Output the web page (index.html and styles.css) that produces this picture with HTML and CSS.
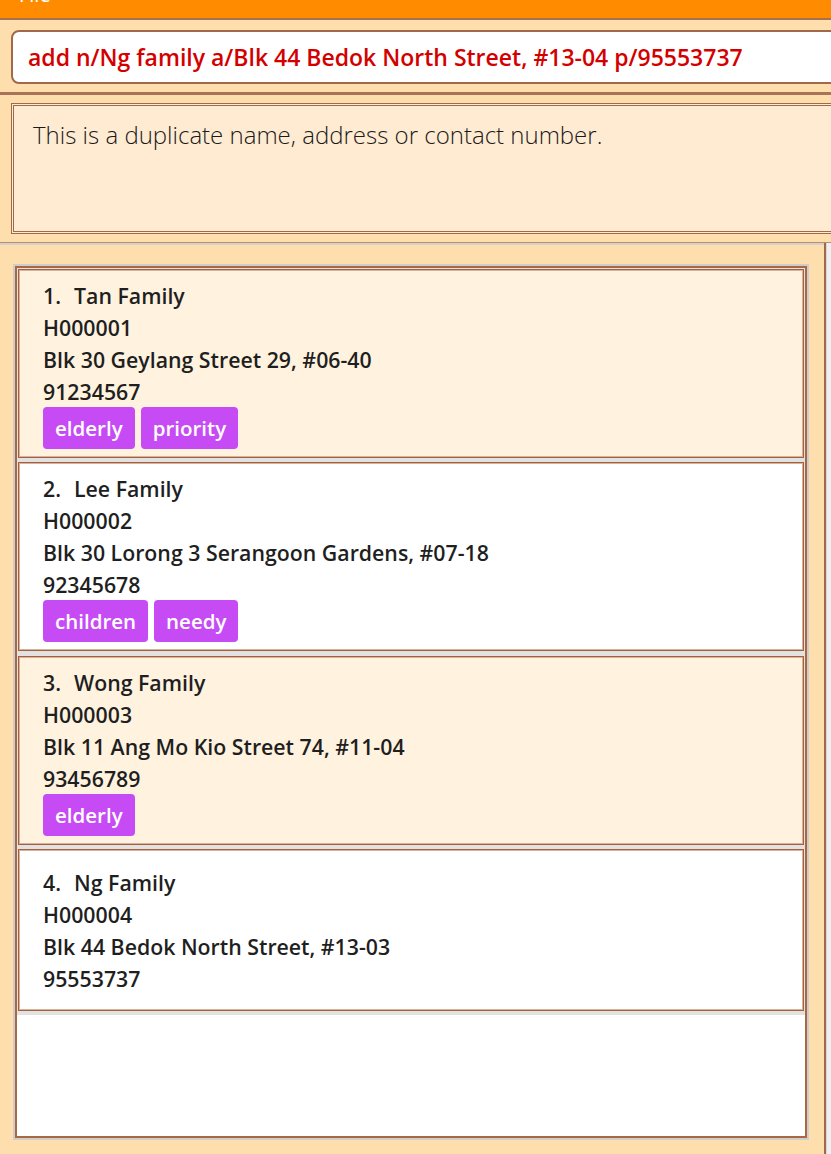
FILE: index.html
```html
<!DOCTYPE html>
<html>
<head>
<meta charset="utf-8">
<link rel="stylesheet" href="styles.css">
</head>
<body>
<div class="app">
  <div class="menubar"><span class="menu-item">File</span></div>
  <div class="command-pane">
    <div class="command-box">add n/Ng family a/Blk 44 Bedok North Street, #13-04 p/95553737</div>
  </div>
  <div class="result-pane">
    <div class="result-box">This is a duplicate name, address or contact number.</div>
  </div>
  <div class="list-row">
    <div class="list-pane">
      <div class="list">
        <div class="list-inner">
          <div class="cell">
            <div class="card odd">
              <div class="line"><span class="idx">1.</span>Tan Family</div>
              <div class="line">H000001</div>
              <div class="line">Blk 30 Geylang Street 29, #06-40</div>
              <div class="line">91234567</div>
              <div class="tags"><span class="tag">elderly</span><span class="tag">priority</span></div>
            </div>
          </div>
          <div class="cell">
            <div class="card even">
              <div class="line"><span class="idx">2.</span>Lee Family</div>
              <div class="line">H000002</div>
              <div class="line">Blk 30 Lorong 3 Serangoon Gardens, #07-18</div>
              <div class="line">92345678</div>
              <div class="tags"><span class="tag">children</span><span class="tag">needy</span></div>
            </div>
          </div>
          <div class="cell">
            <div class="card odd">
              <div class="line"><span class="idx">3.</span>Wong Family</div>
              <div class="line">H000003</div>
              <div class="line">Blk 11 Ang Mo Kio Street 74, #11-04</div>
              <div class="line">93456789</div>
              <div class="tags"><span class="tag">elderly</span></div>
            </div>
          </div>
          <div class="cell">
            <div class="card even">
              <div class="line"><span class="idx">4.</span>Ng Family</div>
              <div class="line">H000004</div>
              <div class="line">Blk 44 Bedok North Street, #13-03</div>
              <div class="line">95553737</div>
            </div>
          </div>
          <div class="list-empty"></div>
        </div>
      </div>
    </div>
    <div class="edge"></div>
  </div>
</div>
</body>
</html>
```

FILE: styles.css
```css
html, body {
  margin: 0;
  padding: 0;
  height: 100%;
  overflow: hidden;
}
body {
  background: #ffdead;
  font-family: "Open Sans", "Noto Sans", sans-serif;
}
.app {
  display: flex;
  flex-direction: column;
  height: 1154px;
}
.menubar {
  height: 18px;
  background: #ff8c00;
  border-bottom: 2px solid #a9704f;
  display: flex;
  padding-left: 19px;
  overflow: hidden;
}
.menu-item {
  color: #ffffff;
  font-size: 20px;
  line-height: 20px;
  margin-top: -15px;
}
.command-pane {
  padding: 10px 0 8px 11px;
}
.command-box {
  height: 50px;
  margin-right: -30px;
  background: #ffffff;
  border: 2px solid #a0694b;
  border-radius: 8px;
  color: #d40000;
  font-weight: 600;
  font-size: 23px;
  line-height: 50px;
  padding-left: 15px;
  white-space: nowrap;
}
.result-pane {
  border-top: 3px solid #a87357;
  padding: 8px 0 8px 11px;
}
.result-box {
  height: 111px;
  margin-right: -30px;
  background: #ffebd2;
  border: 3px double #a0694b;
  color: #1a1a1a;
  font-weight: 300;
  font-size: 24px;
  line-height: 30px;
  padding: 14px 0 0 19px;
  box-sizing: content-box;
  white-space: nowrap;
}
.list-row {
  flex: 1;
  display: flex;
  border-top: 1px solid #b98b70;
  box-shadow: inset 0 2px 0 #d6d0ca;
  min-height: 0;
}
.list-pane {
  width: 826px;
  border-right: 2px solid #a0694b;
  padding: 21px 0 14px 13px;
  box-sizing: border-box;
  display: flex;
  flex-direction: column;
}
.edge {
  flex: 1;
  background: #efefef;
  border-left: 1px solid #d8d8d8;
}
.list {
  width: 796px;
  flex: 1;
  border: 2px solid #cdcdcd;
  box-sizing: border-box;
  display: flex;
  flex-direction: column;
}
.list-inner {
  flex: 1;
  border: 2px solid #a9683f;
  background: #ffffff;
  display: flex;
  flex-direction: column;
}
.cell {
  background: #e2e2e2;
  padding: 1px 1px 3.4px 1px;
}
.list-empty {
  flex: 1;
  background: #ffffff;
}
.card {
  min-height: 162px;
  box-sizing: border-box;
  border: 1px solid #a3603c;
  box-shadow: inset 0 0 0 1px #d9b19c;
  padding: 10px 0 8px 24px;
  display: flex;
  flex-direction: column;
  justify-content: center;
  color: #1f1f1f;
  font-weight: 600;
  font-size: 21.3px;
}
.card.odd {
  background: #fff3e0;
}
.card.even {
  background: #ffffff;
}
.line {
  line-height: 32px;
  height: 32px;
  white-space: nowrap;
}
.idx {
  margin-right: 13px;
}
.tags {
  display: flex;
  gap: 6px;
  margin-top: -1px;
}
.tag {
  background: #c64bf5;
  color: #ffffff;
  height: 42px;
  line-height: 42px;
  padding: 0 12px;
  border-radius: 4px;
  font-size: 20.5px;
  font-weight: 600;
}
```
